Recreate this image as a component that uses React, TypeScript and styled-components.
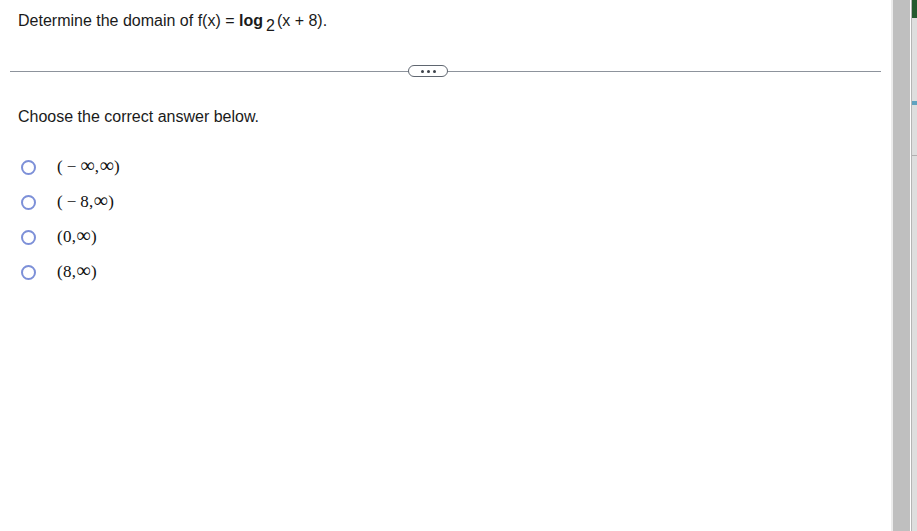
import styled, { createGlobalStyle } from 'styled-components';

const GlobalStyle = createGlobalStyle`
  html, body {
    margin: 0;
    padding: 0;
    background: #fff;
  }
  body {
    font-family: Arial, "Liberation Sans", sans-serif;
    color: #1a1a1a;
  }
`;

const Page = styled.div`
  display: flex;
  width: 917px;
  height: 531px;
  overflow: hidden;
`;

const Main = styled.div`
  flex: 1;
  padding: 12px 0 0 10px;
`;

const Question = styled.div`
  font-size: 16px;
  padding-left: 8px;
  line-height: 18px;
  height: 32px;

  b {
    font-weight: bold;
  }

  sub {
    font-size: 16px;
    vertical-align: -5px;
    line-height: 0;
    margin: 0 2px 0 3px;
  }
`;

const Divider = styled.div`
  position: relative;
  width: 871px;
  height: 1px;
  background: #8d939c;
  margin-top: 27px;
`;

const MoreButton = styled.div`
  position: absolute;
  left: 398px;
  top: -6px;
  width: 38px;
  height: 10px;
  border: 1px solid #5f6670;
  border-radius: 6px;
  background: #fff;
  display: flex;
  align-items: center;
  justify-content: center;
  gap: 3px;
`;

const Dot = styled.span`
  width: 3px;
  height: 3px;
  border-radius: 50%;
  background: #3d434b;
`;

const Prompt = styled.div`
  font-size: 16px;
  padding-left: 8px;
  margin-top: 36px;
  line-height: 18px;
`;

const Options = styled.div`
  margin-top: 32px;
  display: flex;
  flex-direction: column;
  gap: 17px;
`;

const Option = styled.label`
  display: flex;
  align-items: center;
  height: 18px;
  padding-left: 11px;
  cursor: pointer;
`;

const Radio = styled.span`
  width: 11px;
  height: 11px;
  border: 2px solid #7d90d8;
  border-radius: 50%;
  margin-right: 21px;
  box-sizing: content-box;
`;

const Math = styled.span`
  font-family: "Liberation Serif", "DejaVu Serif", serif;
  font-size: 17px;
  color: #111;
  letter-spacing: 0.3px;
`;

const Infinity = styled.span`
  font-size: 20px;
  line-height: 0;
`;

const Side = styled.div`
  display: flex;
  width: 26px;
  height: 100%;
`;

const Track = styled.div`
  width: 17px;
  background: #bfbfbf;
  border-left: 2px solid #ececec;
`;

const Gap = styled.div`
  width: 1px;
  background: #fff;
`;

const Panel = styled.div`
  flex: 1;
  background: #dedede;
  border-left: 1px solid #b5b5b5;
  display: flex;
  flex-direction: column;
`;

const PanelTop = styled.div`
  height: 18px;
  background: #245a2e;
`;

const PanelMark = styled.div`
  height: 4px;
  background: #5fa3c0;
  margin-top: 83px;
`;

const PanelRule = styled.div`
  height: 1px;
  background: #b0b0b0;
  margin-top: 50px;
`;

const inf = <Infinity>∞</Infinity>;

const options = [
  <>(&thinsp;−&thinsp;{inf},{inf})</>,
  <>(&thinsp;−&thinsp;8,{inf})</>,
  <>(0,{inf})</>,
  <>(8,{inf})</>,
];

const App = () => {
  return (
    <>
      <GlobalStyle />
      <Page>
        <Main>
          <Question>
            Determine the domain of f(x) = <b>log</b>
            <sub>2</sub>(x + 8).
          </Question>
          <Divider>
            <MoreButton>
              <Dot />
              <Dot />
              <Dot />
            </MoreButton>
          </Divider>
          <Prompt>Choose the correct answer below.</Prompt>
          <Options>
            {options.map((opt, i) => (
              <Option key={i}>
                <Radio />
                <Math>{opt}</Math>
              </Option>
            ))}
          </Options>
        </Main>
        <Side>
          <Track />
          <Gap />
          <Panel>
            <PanelTop />
            <PanelMark />
            <PanelRule />
          </Panel>
        </Side>
      </Page>
    </>
  );
};

export default App;
